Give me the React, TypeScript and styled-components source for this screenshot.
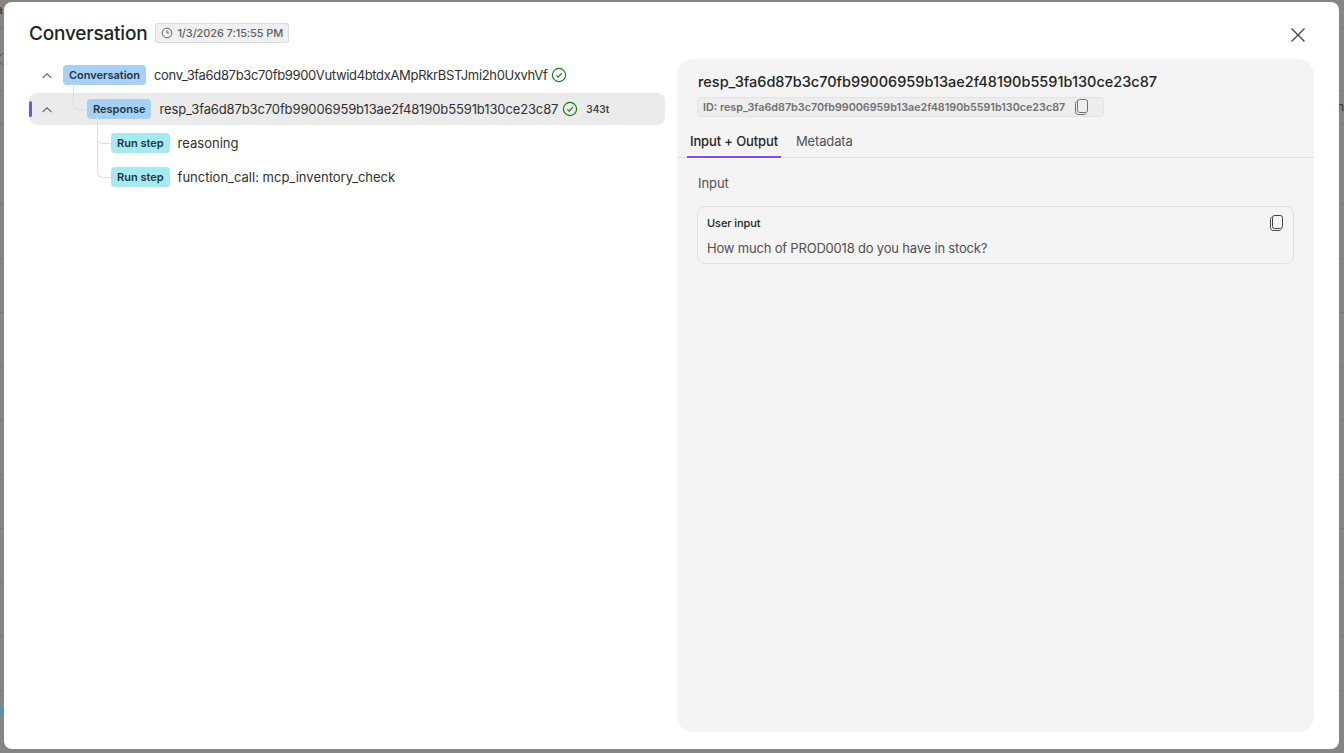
import React from 'react';
import styled, {createGlobalStyle} from 'styled-components';

const GlobalStyle = createGlobalStyle`
  html, body {
    margin: 0;
    padding: 0;
    height: 100%;
    overflow: hidden;
  }
  body {
    font-family: Inter, 'Noto Sans', sans-serif;
    color: #242424;
  }
`;

// faint table rules of the page behind the dimmed overlay
const PAGE_LINES = [27, 90, 123, 204, 258, 312, 366, 420, 474, 528, 582, 636, 690]
  .map(y => `linear-gradient(#7a7a7a, #7a7a7a) 0 ${y}px / 100% 1px no-repeat`)
  .join(', ');

const Backdrop = styled.div`
  position: relative;
  width: 1344px;
  height: 753px;
  overflow: hidden;
  background: ${PAGE_LINES}, #858585;
  padding: 2px 5px 4px 4px;
  box-sizing: border-box;
`;

const PageText = styled.span<{$side: 'left' | 'right'; $top: number}>`
  position: absolute;
  top: ${p => p.$top}px;
  ${p => (p.$side === 'left' ? 'left: -4px;' : 'right: -4px;')}
  font-size: 12px;
  line-height: 14px;
  color: #3a3128;
`;

const PageChevron = styled.span`
  position: absolute;
  left: -4px;
  top: 52px;
  display: flex;
  color: #555;
`;

const PageChip = styled.span`
  position: absolute;
  left: 0;
  top: 706px;
  width: 4px;
  height: 10px;
  background: #5f8da6;
`;

const Modal = styled.div`
  position: relative;
  height: 100%;
  background: #fff;
  border-radius: 8px;
  display: flex;
  flex-direction: column;
  padding: 18px 25px 17px 25px;
  box-sizing: border-box;
`;

const Header = styled.header`
  display: flex;
  align-items: center;
  height: 26px;
  margin-bottom: 13px;
`;

const Title = styled.h2`
  margin: 0;
  font-size: 19px;
  font-weight: 500;
  letter-spacing: -0.2px;
`;

const Timestamp = styled.div`
  display: flex;
  align-items: center;
  gap: 4px;
  height: 18px;
  margin-left: 8px;
  padding: 0 5px;
  font-size: 11px;
  font-weight: 500;
  letter-spacing: -0.1px;
  color: #616161;
  background: #f0f0f0;
  border: 1px solid #d9d9d9;
  border-radius: 3px;
`;

const CloseButton = styled.button`
  margin-left: auto;
  margin-right: 6px;
  margin-top: 4px;
  padding: 0;
  width: 20px;
  height: 20px;
  background: none;
  border: none;
  color: #424242;
`;

const Body = styled.div`
  flex: 1;
  display: flex;
  gap: 12px;
  min-height: 0;
`;

const TreePanel = styled.div`
  width: 636px;
  flex: none;
`;

const Row = styled.div<{$selected?: boolean; $depth: number}>`
  position: relative;
  display: flex;
  align-items: center;
  height: 32px;
  margin-bottom: 2px;
  padding-left: ${p => 34 + p.$depth * 24}px;
  border-radius: 8px;
  background: ${p => (p.$selected ? '#ebebeb' : 'transparent')};
`;

const SelectedMark = styled.span`
  position: absolute;
  left: 0;
  top: 8px;
  width: 3px;
  height: 16px;
  border-radius: 2px;
  background: #7c4dea;
`;

const Chevron = styled.span`
  position: absolute;
  left: 11px;
  top: 8px;
  width: 14px;
  height: 14px;
  color: #616161;
`;

const Connector = styled.span<{$left: number; $height: number}>`
  position: absolute;
  left: ${p => p.$left}px;
  bottom: 15px;
  width: 13px;
  height: ${p => p.$height}px;
  border-left: 1px solid #e0e0e0;
  border-bottom: 1px solid #e0e0e0;
  border-bottom-left-radius: 6px;
`;

const Tag = styled.span<{$kind: 'blue' | 'teal'}>`
  flex: none;
  height: 20px;
  line-height: 21px;
  padding: 0 6px;
  border-radius: 4px;
  font-size: 11px;
  font-weight: 600;
  color: #1f3547;
  background: ${p => (p.$kind === 'blue' ? '#a6d1f4' : '#a5eaee')};
`;

const RowLabel = styled.span<{$tracking?: number}>`
  margin-left: 8px;
  font-size: 13px;
  letter-spacing: ${p => p.$tracking ?? 0}px;
  color: #303030;
  white-space: nowrap;
`;

const StatusIcon = styled.span`
  display: flex;
  margin-left: 4px;
  color: #107c10;
`;

const Tokens = styled.span`
  margin-left: 8px;
  font-size: 10px;
  font-weight: 600;
  color: #424242;
`;

const DetailPanel = styled.section`
  flex: 1;
  min-width: 0;
  background: #f4f4f4;
  border-radius: 16px;
  padding-top: 12px;
`;

const DetailHead = styled.div`
  padding: 0 20px;
`;

const DetailTitle = styled.h3`
  margin: 0;
  padding-left: 1px;
  font-size: 14.5px;
  font-weight: 500;
  line-height: 22px;
  color: #242424;
`;

const IdChip = styled.div`
  display: inline-flex;
  align-items: center;
  gap: 9px;
  height: 18px;
  margin-top: 4px;
  padding: 0 13px 0 5px;
  font-size: 10.75px;
  font-weight: 600;
  color: #707070;
  background: #ededed;
  border: 1px solid #e3e3e3;
  border-radius: 3px;
`;

const TabBar = styled.div`
  display: flex;
  gap: 12px;
  height: 41px;
  padding: 0 10px;
  border-bottom: 1px solid #e0e0e0;
  box-sizing: border-box;
`;

const Tab = styled.div<{$active?: boolean}>`
  display: flex;
  align-items: center;
  padding: 8px 3px 0;
  font-size: 13px;
  font-weight: ${p => (p.$active ? 500 : 400)};
  letter-spacing: -0.13px;
  color: ${p => (p.$active ? '#242424' : '#505050')};
  border-bottom: 2px solid ${p => (p.$active ? '#7c4dea' : 'transparent')};
  margin-bottom: -1px;
`;

const TabBody = styled.div`
  padding: 16px 20px;
`;

const SectionLabel = styled.div`
  padding-left: 1px;
  font-size: 13px;
  line-height: 18px;
  letter-spacing: -0.05px;
  color: #505050;
  margin-bottom: 14px;
`;

const InputCard = styled.div`
  position: relative;
  height: 58px;
  padding: 8px 9px;
  box-sizing: border-box;
  border: 1px solid #e0e0e0;
  border-radius: 8px;
`;

const CardTitle = styled.div`
  font-size: 11px;
  font-weight: 500;
  line-height: 16px;
  letter-spacing: -0.08px;
  color: #242424;
`;

const CardText = styled.div`
  margin-top: 9px;
  font-size: 13px;
  line-height: 16px;
  letter-spacing: -0.19px;
  color: #505050;
`;

const CardCopy = styled.span`
  position: absolute;
  right: 8px;
  top: 7px;
  display: flex;
  color: #424242;
`;

function CopyIcon() {
  return (
    <svg width="16" height="18" viewBox="0 0 16 18" fill="none" stroke="currentColor" strokeWidth="1">
      <rect x="3.5" y="1.5" width="10" height="13" rx="2" />
      <path d="M3.5 3.2C2.4 3.4 1.5 4 1.5 5.2v8.6c0 1.6 1.1 2.7 2.7 2.7h6.2c.8 0 1.3-.4 1.6-1" />
    </svg>
  );
}

function CheckCircle() {
  return (
    <svg width="16" height="16" viewBox="0 0 16 16" fill="none" stroke="currentColor" strokeWidth="1.1">
      <circle cx="8" cy="8" r="6.6" />
      <path d="M5.3 8.3l1.9 1.9 3.6-4" />
    </svg>
  );
}

function ChevronUp() {
  return (
    <svg width="14" height="14" viewBox="0 0 14 14" fill="none" stroke="currentColor" strokeWidth="1.1">
      <path d="M2.5 9.2L7 4.8l4.5 4.4" />
    </svg>
  );
}

function ClockIcon() {
  return (
    <svg width="12" height="12" viewBox="0 0 12 12" fill="none" stroke="currentColor" strokeWidth="1">
      <circle cx="6" cy="6" r="4.8" />
      <path d="M6 3.2V6h2" />
    </svg>
  );
}

function CloseIcon() {
  return (
    <svg width="20" height="20" viewBox="0 0 20 20" fill="none" stroke="currentColor" strokeWidth="1.3">
      <path d="M3.5 3.5l13 13M16.5 3.5l-13 13" />
    </svg>
  );
}

const RESP_ID = 'resp_3fa6d87b3c70fb99006959b13ae2f48190b5591b130ce23c87';

export default function App() {
  return (
    <>
      <GlobalStyle />
      <Backdrop>
        <PageText $side="left" $top={3}>a</PageText>
        <PageText $side="right" $top={100}>nt</PageText>
        <PageChevron>
          <svg width="8" height="14" viewBox="0 0 8 14" fill="none" stroke="currentColor" strokeWidth="1">
            <path d="M7 1L1 7l6 6" />
          </svg>
        </PageChevron>
        <PageChip />
        <Modal>
          <Header>
            <Title>Conversation</Title>
            <Timestamp>
              <ClockIcon />
              1/3/2026 7:15:55 PM
            </Timestamp>
            <CloseButton aria-label="Close">
              <CloseIcon />
            </CloseButton>
          </Header>
          <Body>
            <TreePanel>
              <Row $depth={0}>
                <Chevron>
                  <ChevronUp />
                </Chevron>
                <Tag $kind="blue">Conversation</Tag>
                <RowLabel $tracking={-0.34}>conv_3fa6d87b3c70fb9900Vutwid4btdxAMpRkrBSTJmi2h0UxvhVf</RowLabel>
                <StatusIcon>
                  <CheckCircle />
                </StatusIcon>
              </Row>
              <Row $depth={1} $selected>
                <SelectedMark />
                <Chevron>
                  <ChevronUp />
                </Chevron>
                <Connector $left={44} $height={26} />
                <Tag $kind="blue">Response</Tag>
                <RowLabel $tracking={-0.12}>{RESP_ID}</RowLabel>
                <StatusIcon>
                  <CheckCircle />
                </StatusIcon>
                <Tokens>343t</Tokens>
              </Row>
              <Row $depth={2}>
                <Connector $left={68} $height={26} />
                <Tag $kind="teal">Run step</Tag>
                <RowLabel>reasoning</RowLabel>
              </Row>
              <Row $depth={2}>
                <Connector $left={68} $height={40} />
                <Tag $kind="teal">Run step</Tag>
                <RowLabel>function_call: mcp_inventory_check</RowLabel>
              </Row>
            </TreePanel>
            <DetailPanel>
              <DetailHead>
                <DetailTitle>{RESP_ID}</DetailTitle>
                <IdChip>
                  ID: {RESP_ID}
                  <CopyIcon />
                </IdChip>
              </DetailHead>
              <TabBar>
                <Tab $active>Input + Output</Tab>
                <Tab>Metadata</Tab>
              </TabBar>
              <TabBody>
                <SectionLabel>Input</SectionLabel>
                <InputCard>
                  <CardTitle>User input</CardTitle>
                  <CardText>How much of PROD0018 do you have in stock?</CardText>
                  <CardCopy>
                    <CopyIcon />
                  </CardCopy>
                </InputCard>
              </TabBody>
            </DetailPanel>
          </Body>
        </Modal>
      </Backdrop>
    </>
  );
}
